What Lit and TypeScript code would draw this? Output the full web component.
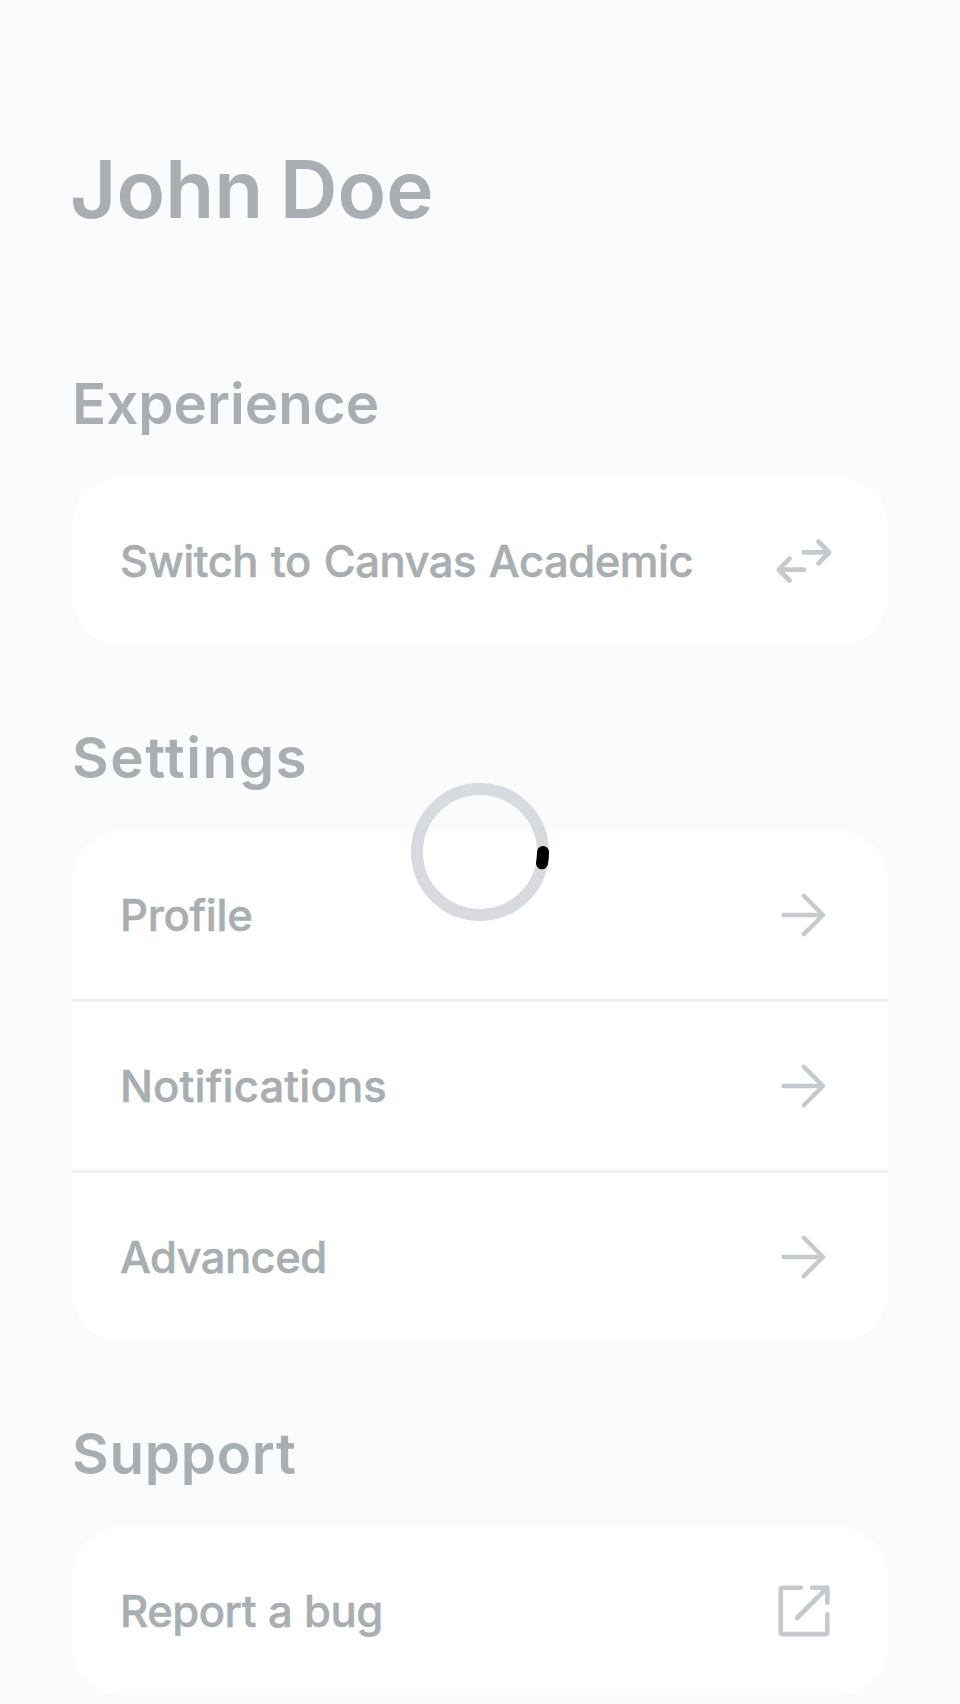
import { LitElement, html, css, svg } from "lit";
import { customElement, property } from "lit/decorators.js";

type IconName = "swap" | "arrow" | "external";
interface Row { label: string; icon: IconName; tracking: number; wordGap?: number }
interface Section { title: string; tracking: number; rows: Row[] }

const sections: Section[] = [
  { title: "Experience", tracking: 0, rows: [{ label: "Switch to Canvas Academic", icon: "swap", tracking: -0.5, wordGap: 1.8 }] },
  {
    title: "Settings", tracking: 1.5, rows: [
      { label: "Profile", icon: "arrow", tracking: -0.3 },
      { label: "Notifications", icon: "arrow", tracking: 0.15 },
      { label: "Advanced", icon: "arrow", tracking: -0.6 },
    ],
  },
  { title: "Support", tracking: 0.7, rows: [{ label: "Report a bug", icon: "external", tracking: -0.5, wordGap: 0.8 }] },
];

const icons = {
  arrow: svg`<path stroke-width="4.4" d="M9.5 30H48.5M29.8 10.8 49 30 29.8 49.2"/>`,
  swap: svg`<path stroke-width="4.7" d="M29.7 21.4H54.5M44.4 10.5 55.2 21.4 44.4 32.3M30.1 38.6H5.5M15.6 27.7 4.8 38.6 15.6 49.5"/>`,
  external: svg`<path stroke-width="4.6" d="M26.7 6.7H8.7Q6.7 6.7 6.7 8.7V51.1Q6.7 53.1 8.7 53.1H51.3Q53.3 53.1 53.3 51.1V33.4M38.2 6.7H53.3V21.8M53.3 6.7 23 37"/>`,
};

@customElement("menu-row")
export class MenuRow extends LitElement {
  @property({ attribute: false }) row!: Row;
  static styles = css`
    :host { display: flex; align-items: center; justify-content: space-between; height: 168px; padding: 0 54px 0 48px; box-sizing: border-box; }
    .label { padding-top: 2px; font-size: 43.6px; font-weight: 500; -webkit-text-stroke: 0.5px currentColor; line-height: 60px; white-space: nowrap; }
    .icon { width: 60px; height: 60px; flex: none; fill: none; stroke: #c4cace; stroke-linecap: round; stroke-linejoin: round; }
  `;
  render() {
    const { label, icon, tracking, wordGap = 0 } = this.row;
    return html`<span class="label" style="letter-spacing:${tracking}px;word-spacing:${wordGap}px">${label}</span>
      <svg class="icon" viewBox="0 0 60 60">${icons[icon]}</svg>`;
  }
}

@customElement("app-root")
export class AppRoot extends LitElement {
  static styles = css`
    :host { display: block; position: relative; height: 1704px; overflow: hidden; box-sizing: border-box; padding: 149px 72px 0; background: #fafcfc; color: #a8aeb2; font-family: Inter, "Liberation Sans", sans-serif; }
    h1 { margin: 0 0 0 -2px; font-size: 80px; line-height: 80px; font-weight: 600; word-spacing: -4px; letter-spacing: 0.1px; white-space: nowrap; }
    h2 { margin: 0 0 43px; font-size: 56.5px; line-height: 60px; font-weight: 600; white-space: nowrap; }
    .sections { display: flex; flex-direction: column; gap: 83px; margin-top: 145px; }
    .card { background: #fff; border-radius: 50px; }
    menu-row + menu-row { margin-top: 3px; position: relative; }
    menu-row + menu-row::before { content: ""; position: absolute; left: 0; right: 0; top: -3px; height: 3px; background: #eeefef; }
    .spinner { position: absolute; left: 411px; top: 783px; width: 138px; height: 138px; fill: none; stroke-width: 12; }
    .track { stroke: #d7dade; }
    .progress { stroke: #000; stroke-linecap: round; }
  `;
  render() {
    return html`
      <h1>John Doe</h1>
      <div class="sections">
        ${sections.map((s) => html`<section>
          <h2 style="letter-spacing:${s.tracking}px">${s.title}</h2>
          <div class="card">${s.rows.map((r) => html`<menu-row .row=${r}></menu-row>`)}</div>
        </section>`)}
      </div>
      <svg class="spinner" viewBox="0 0 138 138">
        <circle class="track" cx="69" cy="69" r="63"/>
        <path class="progress" d="M132 69A63 63 0 0 1 131 80.3"/>
      </svg>`;
  }
}
